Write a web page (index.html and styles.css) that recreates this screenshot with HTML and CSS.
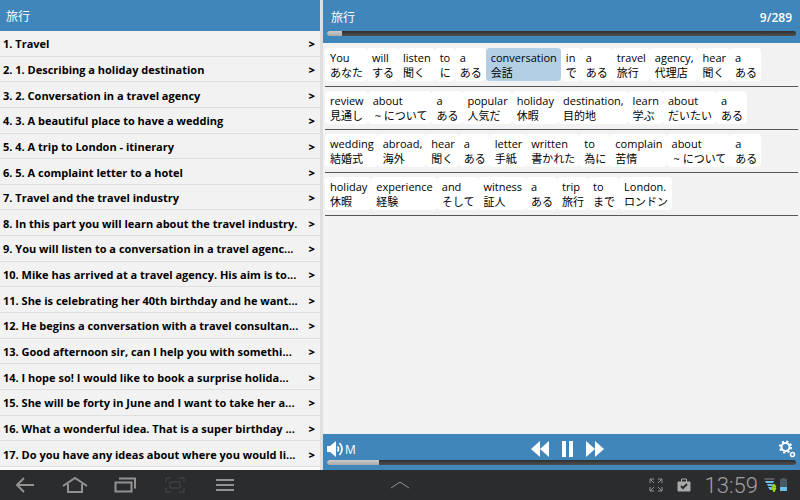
FILE: index.html
```
<!doctype html>
<html lang="en">
<head>
    <meta charset="utf-8">
    <meta content="width=device-width,initial-scale=1" name="viewport">
    <title>旅行</title>
    <link rel="stylesheet" href="styles.css">
</head>
<body>
<main class="main">
    <nav class="sidebar">
        <h1 class="title">旅行</h1>
        <ul class="list">
            <li><a href="#1"><span>1. Travel</span><b>&gt;</b></a></li>
            <li><a href="#2"><span>2. 1. Describing a holiday destination</span><b>&gt;</b></a></li>
            <li><a href="#3"><span>3. 2. Conversation in a travel agency</span><b>&gt;</b></a></li>
            <li><a href="#4"><span>4. 3. A beautiful place to have a wedding</span><b>&gt;</b></a></li>
            <li><a href="#5"><span>5. 4. A trip to London - itinerary</span><b>&gt;</b></a></li>
            <li><a href="#6"><span>6. 5. A complaint letter to a hotel</span><b>&gt;</b></a></li>
            <li><a href="#7"><span>7. Travel and the travel industry</span><b>&gt;</b></a></li>
            <li><a href="#8"><span>8. In this part you will learn about the travel industry.</span><b>&gt;</b></a></li>
            <li><a href="#9"><span>9. You will listen to a conversation in a travel agenc...</span><b>&gt;</b></a></li>
            <li><a href="#10"><span>10. Mike has arrived at a travel agency. His aim is to...</span><b>&gt;</b></a></li>
            <li><a href="#11"><span>11. She is celebrating her 40th birthday and he want...</span><b>&gt;</b></a></li>
            <li><a href="#12"><span>12. He begins a conversation with a travel consultan...</span><b>&gt;</b></a></li>
            <li><a href="#13"><span>13. Good afternoon sir, can I help you with somethi...</span><b>&gt;</b></a></li>
            <li><a href="#14"><span>14. I hope so! I would like to book a surprise holida...</span><b>&gt;</b></a></li>
            <li><a href="#15"><span>15. She will be forty in June and I want to take her a...</span><b>&gt;</b></a></li>
            <li><a href="#16"><span>16. What a wonderful idea. That is a super birthday ...</span><b>&gt;</b></a></li>
            <li><a href="#17"><span>17. Do you have any ideas about where you would li...</span><b>&gt;</b></a></li>
        </ul>
    </nav>

    <section class="reader">
        <header class="reader-head">
            <div class="head-row">
                <h2 class="title">旅行</h2>
                <span class="count">9/289</span>
            </div>
            <progress class="bar" max="289" value="9" aria-label="Sentence"></progress>
        </header>

        <div class="text">
            <div class="line">
                <div class="word">You<span lang="ja">あなた</span></div>
                <div class="word">will<span lang="ja">する</span></div>
                <div class="word">listen<span lang="ja">聞く</span></div>
                <div class="word">to<span lang="ja">に</span></div>
                <div class="word">a<span lang="ja">ある</span></div>
                <div class="word active">conversation<span lang="ja">会話</span></div>
                <div class="word">in<span lang="ja">で</span></div>
                <div class="word">a<span lang="ja">ある</span></div>
                <div class="word">travel<span lang="ja">旅行</span></div>
                <div class="word">agency,<span lang="ja">代理店</span></div>
                <div class="word">hear<span lang="ja">聞く</span></div>
                <div class="word">a<span lang="ja">ある</span></div>
            </div>
            <div class="line">
                <div class="word">review<span lang="ja">見通し</span></div>
                <div class="word">about<span lang="ja" class="tilde">~ について</span></div>
                <div class="word">a<span lang="ja">ある</span></div>
                <div class="word">popular<span lang="ja">人気だ</span></div>
                <div class="word">holiday<span lang="ja">休暇</span></div>
                <div class="word">destination,<span lang="ja">目的地</span></div>
                <div class="word">learn<span lang="ja">学ぶ</span></div>
                <div class="word">about<span lang="ja">だいたい</span></div>
                <div class="word">a<span lang="ja">ある</span></div>
            </div>
            <div class="line">
                <div class="word">wedding<span lang="ja">結婚式</span></div>
                <div class="word">abroad,<span lang="ja">海外</span></div>
                <div class="word">hear<span lang="ja">聞く</span></div>
                <div class="word">a<span lang="ja">ある</span></div>
                <div class="word">letter<span lang="ja">手紙</span></div>
                <div class="word">written<span lang="ja">書かれた</span></div>
                <div class="word">to<span lang="ja">為に</span></div>
                <div class="word">complain<span lang="ja">苦情</span></div>
                <div class="word">about<span lang="ja" class="tilde">~ について</span></div>
                <div class="word">a<span lang="ja">ある</span></div>
            </div>
            <div class="line">
                <div class="word">holiday<span lang="ja">休暇</span></div>
                <div class="word">experience<span lang="ja">経験</span></div>
                <div class="word">and<span lang="ja">そして</span></div>
                <div class="word">witness<span lang="ja">証人</span></div>
                <div class="word">a<span lang="ja">ある</span></div>
                <div class="word">trip<span lang="ja">旅行</span></div>
                <div class="word">to<span lang="ja">まで</span></div>
                <div class="word">London.<span lang="ja">ロンドン</span></div>
            </div>
        </div>

        <footer class="player">
            <div class="controls">
                <button class="volume" type="button" aria-label="Volume">
                    <svg width="17" height="16" viewBox="0 0 17 16">
                        <path d="M0 5h3l6-5v16l-6-5H0z" fill="#fff"/>
                        <path d="M10.500 5.500q2 2.500 0 5M12.500 2q5 6 0 12" fill="none" stroke="#fff" stroke-width="1.700"/>
                    </svg>
                    <span>M</span>
                </button>
                <div class="transport">
                    <button type="button" aria-label="Previous">
                        <svg width="18" height="16" viewBox="0 0 18 16"><path d="M9 0v16L0 8zM18 0v16L9 8z" fill="#fff"/></svg>
                    </button>
                    <button type="button" aria-label="Pause">
                        <svg width="11" height="16" viewBox="0 0 11 16"><path d="M0 0h4v16H0zM7 0h4v16H7z" fill="#fff"/></svg>
                    </button>
                    <button type="button" aria-label="Next">
                        <svg width="18" height="16" viewBox="0 0 18 16"><path d="M0 0v16l9-8zM9 0v16l9-8z" fill="#fff"/></svg>
                    </button>
                </div>
                <button class="settings" type="button" aria-label="Settings">
                    <svg width="17" height="18" viewBox="0 0 17 18" fill="none" stroke="#fff">
                        <circle cx="6.5" cy="7" r="4" stroke-width="2"/>
                        <circle cx="6.5" cy="7" r="5.6" stroke-width="2" stroke-dasharray="2.2 2.2"/>
                        <circle cx="13.5" cy="14.5" r="2" stroke-width="1.5"/>
                    </svg>
                </button>
            </div>
            <progress class="bar" max="100" value="11" aria-label="Playback"></progress>
        </footer>
    </section>
</main>

<div class="system">
    <div class="keys">
        <button type="button" aria-label="Back">
            <svg width="26" height="18" viewBox="0 0 26 18"><path d="M22 9H5M12 2L5 9l7 7"/></svg>
        </button>
        <button type="button" aria-label="Home">
            <svg width="26" height="18" viewBox="0 0 26 18"><path d="M1 10L13 2l12 8M6 8v8h14V8"/></svg>
        </button>
        <button type="button" aria-label="Recent apps">
            <svg width="26" height="18" viewBox="0 0 26 18"><path d="M3.500 6.500h16v9h-16zM7 2.500h16v10"/></svg>
        </button>
        <button type="button" aria-label="Screenshot" class="dim">
            <svg width="26" height="18" viewBox="0 0 26 18"><path d="M4 6V2h5M17 2h5v4M22 12v4h-5M9 16H4v-4M8 6h10v6H8z"/></svg>
        </button>
        <button type="button" aria-label="Menu">
            <svg width="26" height="18" viewBox="0 0 26 18"><path d="M4 4h18M4 9h18M4 14h18"/></svg>
        </button>
    </div>
    <button class="up" type="button" aria-label="Show tray">
        <svg width="20" height="10" viewBox="0 0 20 10"><path d="M1 8l9-6 9 6"/></svg>
    </button>
    <div class="status">
        <svg width="14" height="14" viewBox="0 0 14 14"><path d="M1 5V1h4M1 1l4 4M9 1h4v4M13 1L9 5M1 9v4h4M1 13l4-4M13 9v4H9M13 13L9 9"/></svg>
        <svg width="14" height="14" viewBox="0 0 14 14">
            <path d="M1 4h12v9H1z" fill="#aaa" stroke="#aaa"/>
            <path d="M4.500 4V1h5v3" stroke="#aaa"/>
            <path d="M4 8l2 2 4-4" stroke="#2b2c2e" stroke-width="2"/>
        </svg>
        <span class="clock">13:59</span>
        <svg width="24" height="16" viewBox="0 0 24 16" class="signal">
            <path d="M0 1h11l-1 2H1z" fill="#555b60"/>
            <path d="M1 4h9L9 6H2zM3 7h6l-1 2H4zM4 10h4v3H6z" fill="#6fc0e8"/>
            <path d="M10 7l2 3H8zM10 15l2-4H8z" fill="#a4e000" stroke="#a4e000"/>
            <path d="M16 2h2V1h3v1h2v12h-7z" fill="#4a5a64"/>
            <path d="M16 10h7v4h-7z" fill="#6fc0e8"/>
        </svg>
    </div>
</div>
</body>
</html>
```
FILE: styles.css
```
* {
    box-sizing: border-box;
}

body {
    margin: 0;
    min-height: 100vh;
    display: flex;
    flex-direction: column;
    font-family: "Open Sans", "Noto Sans CJK JP", sans-serif;
    background: #f2f2f2;
    color: #000000;
    font-size: 11px;
}

button {
    border: 0;
    padding: 0;
    background: none;
    color: #ffffff;
    font: inherit;
    display: flex;
    align-items: center;
}

svg {
    display: block;
}

.main {
    flex: 1;
    display: flex;
}

.title {
    margin: 0;
    font-size: 12px;
    font-weight: normal;
    color: #ffffff;
}

/* left list */
.sidebar {
    width: 40%;
    display: flex;
    flex-direction: column;
}

.sidebar .title {
    height: 31px;
    padding-left: 6px;
    line-height: 34px;
    background: #4086bb;
}

.list {
    flex: 1;
    margin: 0;
    padding: 0;
    list-style: none;
    display: flex;
    flex-direction: column;
    border-bottom: 3px solid #fafafa;
}

.list li {
    flex: 1;
    display: flex;
    border-bottom: 1px solid #dfdfdf;
}

.list a {
    flex: 1;
    display: flex;
    align-items: center;
    justify-content: space-between;
    padding: 2px 5px 0 3px;
    line-height: 20px;
    font-weight: bold;
    color: #000000;
    text-decoration: none;
    white-space: nowrap;
}

/* right side */
.reader {
    flex: 1;
    display: flex;
    flex-direction: column;
    border-left: 3px solid #dfdfdf;
}

.reader-head {
    height: 43px;
    padding: 0 4px;
    background: #4086bb;
}

.head-row {
    height: 31px;
    padding: 3px 4px 0;
    display: flex;
    align-items: center;
    justify-content: space-between;
}

.count {
    font-size: 12px;
    font-weight: 600;
    color: #ffffff;
}

.bar {
    appearance: none;
    display: block;
    width: 100%;
    height: 5px;
    border: 0;
    border-radius: 3px;
    overflow: hidden;
}

.bar::-webkit-progress-bar {
    background: linear-gradient(#2c2e30, #505050);
}

.bar::-webkit-progress-value {
    background: linear-gradient(#cccccc, #a8a8a8);
}

.text {
    flex: 1;
    padding: 1px 2px 0;
}

.line {
    display: flex;
    padding: 4px 0 5px;
    border-bottom: 1px solid #555555;
}

.word {
    padding: 2px 4px 1px 5px;
    line-height: 15px;
    border-radius: 4px;
    background: #ffffff;
    white-space: nowrap;
}

.word span {
    display: block;
}

.word .tilde {
    padding-left: 2px;
}

.active {
    background: #b3cfe5;
}

.player {
    height: 36px;
    padding: 0 4px;
    background: #4086bb;
}

.controls {
    height: 26px;
    padding-top: 4px;
    display: grid;
    grid-template-columns: 1fr auto 1fr;
    align-items: center;
}

.volume {
    gap: 1px;
    font-size: 12px;
}

.transport {
    display: flex;
    gap: 13px;
    padding-left: 12px;
}

.settings {
    justify-self: end;
}

/* tablet system bar */
.system {
    height: 30px;
    padding: 0 12px;
    display: grid;
    grid-template-columns: 1fr auto 1fr;
    align-items: center;
    background: #2b2c2e;
}

.system svg {
    fill: none;
    stroke: #929292;
    stroke-width: 2;
}

.keys {
    display: flex;
    gap: 24px;
}

.system .dim svg {
    stroke: #47484a;
    stroke-width: 1;
}

.system .up svg {
    stroke-width: 1;
}

.status {
    display: flex;
    align-items: center;
    justify-content: flex-end;
    gap: 14px;
}

.system .status svg {
    stroke-width: 1;
}

.clock {
    padding-top: 2px;
    font: 300 22px/28px Roboto, sans-serif;
    color: #a0a0a0;
}

.system .signal {
    margin-left: -8px;
    stroke: none;
}
```
